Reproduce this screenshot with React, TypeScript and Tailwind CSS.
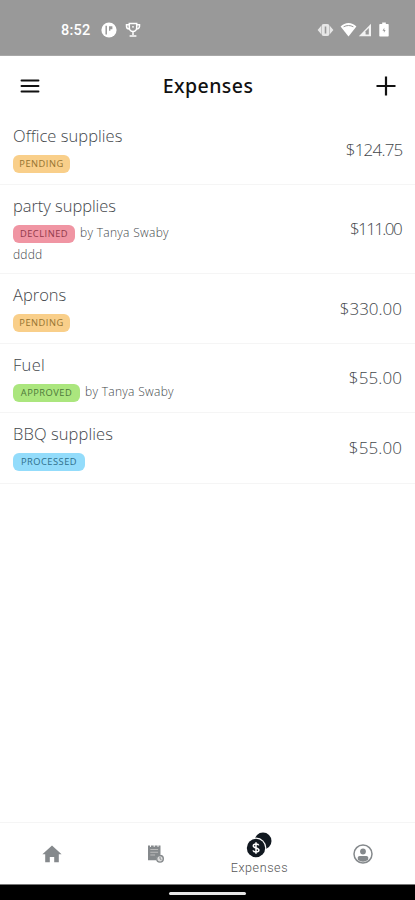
import clsx from "clsx";

type Expense = {
  title: string;
  titleClass: string;
  status: string;
  statusClass: string;
  by?: string;
  note?: string;
  amount: string;
  amountClass: string;
  rowClass: string;
};

const expenses: Expense[] = [
  { title: "Office supplies", titleClass: "tracking-[0.05px]", status: "PENDING", statusClass: "w-[57px] bg-[#f9cf8a] text-[#94722f]", amount: "$124.75", amountClass: "tracking-[-0.8px] mr-[-0.5px]", rowClass: "h-[70px]" },
  { title: "party supplies", titleClass: "tracking-[-0.05px]", status: "DECLINED", statusClass: "w-[62px] bg-[#f095a3] text-[#91394a]", by: "by Tanya Swaby", note: "dddd", amount: "$111.00", amountClass: "tracking-[-1.6px] mr-[1px]", rowClass: "h-[89px]" },
  { title: "Aprons", titleClass: "tracking-[0px]", status: "PENDING", statusClass: "w-[57px] bg-[#f9cf8a] text-[#94722f]", amount: "$330.00", amountClass: "tracking-[0px]", rowClass: "h-[70px]" },
  { title: "Fuel", titleClass: "tracking-[0.3px]", status: "APPROVED", statusClass: "w-[67px] bg-[#abe67e] text-[#4d793a]", by: "by Tanya Swaby", amount: "$55.00", amountClass: "tracking-[0.1px]", rowClass: "h-[69px]" },
  { title: "BBQ supplies", titleClass: "tracking-[0.1px]", status: "PROCESSED", statusClass: "w-[72px] bg-[#93dcfb] text-[#2f6f8c]", amount: "$55.00", amountClass: "tracking-[0.1px]", rowClass: "h-[71px]" },
];

function StatusBar() {
  return (
    <div className="flex h-14 shrink-0 items-center border-b border-[#a8a8a8] bg-[#999999] pt-1 pr-[26px] pl-[61px] text-white">
      <span className="mt-[2px] w-[30px] font-['Roboto'] text-[14.5px] leading-5 font-medium tracking-[0.2px] whitespace-nowrap">8:52</span>
      <svg className="ml-[10px] size-4" viewBox="0 0 16 16">
        <circle cx="8" cy="8" r="7.6" fill="#fff" />
        <path d="M5.2 3.8v8.6" fill="none" stroke="#999" strokeWidth="1.5" />
        <path d="M8 4.2h3.4v3H9.4v1.6H8z" fill="#999" />
      </svg>
      <svg className="ml-2 size-4" viewBox="0 0 16 16" fill="none" stroke="#fff" strokeWidth="1.5">
        <path d="M4.3 1.4h7.4v4.4a3.7 3.7 0 0 1-7.4 0zM4.3 2.8H1.5v1.4a2.8 2.8 0 0 0 2.8 2.8M11.7 2.8h2.8v1.4a2.8 2.8 0 0 1-2.8 2.8M8 9.5V13M4.6 14h6.8" />
        <circle cx="8" cy="4.8" r="0.9" fill="#fff" stroke="none" />
      </svg>
      <div className="ml-auto flex items-center">
        <svg className="h-4 w-[17px]" viewBox="0 0 17 16">
          <rect x="4.6" y="2" width="7.8" height="12" rx="2" fill="#e6e6e6" />
          <path d="M4.2 3.8.6 8l3.6 4.2zM12.8 3.8 16.4 8l-3.6 4.2z" fill="#e6e6e6" />
          <path d="M8.5 4.5v7" stroke="#999" strokeWidth="1.6" />
        </svg>
        <svg className="ml-[6px] h-4 w-[17px]" viewBox="0 0 17 16">
          <path d="M.6 4.6C5-.1 12-.1 16.4 4.6L8.5 14.5z" fill="#fff" />
          <path d="M3.6 4.8c3-1.7 6.8-1.7 9.8 0" fill="none" stroke="#999" strokeWidth="1" />
        </svg>
        <svg className="ml-[1px] size-[14px]" viewBox="0 0 14 14">
          <path d="M13 .8v12.4H.8z" fill="#f2f2f2" />
          <path d="M10.8 5v6.4H7.6V8.2z" fill="#999" />
        </svg>
        <svg className="ml-[7px] h-[15px] w-[10px]" viewBox="0 0 10 15">
          <path d="M3.2.5h3.6V2H9a.7.7 0 0 1 .7.7v11a.7.7 0 0 1-.7.7H1a.7.7 0 0 1-.7-.7v-11A.7.7 0 0 1 1 2h2.2z" fill="#fff" />
          <path d="M5.3 5.8 3.5 8.8h1.4v2L6.6 8H5.3z" fill="#999" />
        </svg>
      </div>
    </div>
  );
}

function Header() {
  return (
    <header className="flex h-[58px] shrink-0 items-center justify-between pt-px pr-[19px] pl-[20px] text-[#111]">
      <svg className="h-[14px] w-[20px]" viewBox="0 0 20 14" stroke="currentColor" strokeWidth="1.9" strokeLinecap="round">
        <path d="M1.5 1.5h17M1.5 7h17M1.5 12.5h17" />
      </svg>
      <h1 className="font-['Noto_Sans'] text-[19.5px] leading-7 font-medium tracking-[0.45px]">Expenses</h1>
      <svg className="size-5" viewBox="0 0 20 20" stroke="currentColor" strokeWidth="2.2">
        <path d="M10 .5v19M.5 10h19" />
      </svg>
    </header>
  );
}

function ExpenseRow({ item }: { item: Expense }) {
  return (
    <li className={clsx("flex shrink-0 items-center justify-between border-b border-[#f5f5f5] pr-[13px] pl-[13px]", item.rowClass)}>
      <div className="flex h-full flex-col pt-[10px]">
        <span className={clsx("text-[16.5px] leading-[22px] whitespace-nowrap", item.titleClass)}>{item.title}</span>
        <div className="mt-[7.5px] flex items-center">
          <span className={clsx("flex h-[18.5px] items-center justify-center rounded-[6px] text-[9.3px] font-normal tracking-[0.5px]", item.statusClass)}>{item.status}</span>
          {item.by && <span className="-mt-px ml-[5px] text-[12px] leading-[18px] tracking-[0.3px] whitespace-nowrap">{item.by}</span>}
        </div>
        {item.note && <span className="mt-[4px] text-[12px] leading-4 tracking-[0.2px]">{item.note}</span>}
      </div>
      <span className={clsx("text-[17px] leading-6", item.amountClass)}>{item.amount}</span>
    </li>
  );
}

function TabBar() {
  return (
    <nav className="grid h-[62px] shrink-0 grid-cols-4 items-center border-t border-[#f5f5f5] text-[#85898c]">
      <div className="flex justify-center">
        <svg className="h-[18px] w-5" viewBox="0 0 20 18" fill="currentColor">
          <path d="M10 .5.4 9.3h2.8v8h4.6v-5.4h4.4v5.4h4.6v-8h2.8z" />
        </svg>
      </div>
      <div className="flex justify-center">
        <svg className="h-[19px] w-[17px]" viewBox="0 0 17 19">
          <path d="M1 1.5h12.5v9.2a4.5 4.5 0 0 0-4.2 5.6H1z" fill="currentColor" />
          <path d="M3.5 0v3M7.2 0v3M11 0v3" stroke="#fff" strokeWidth=".9" />
          <path d="M3.3 5.5h7.8M3.3 8.3h7.8M3.3 11h4.8" stroke="#bbb" strokeWidth="1.1" />
          <circle cx="13" cy="14.8" r="3.3" fill="#ddd" stroke="currentColor" strokeWidth="1.4" />
          <path d="M13 12.8v2l1.5 1" fill="none" stroke="currentColor" strokeWidth="1" />
        </svg>
      </div>
      <div className="flex flex-col items-center">
        <svg className="h-[26px] w-[26px]" viewBox="0 0 26 26">
          <circle cx="17" cy="9" r="8.5" fill="#111820" />
          <circle cx="10" cy="16" r="10.4" fill="#fff" />
          <circle cx="10" cy="16" r="9.2" fill="#111820" />
          <path d="M12.8 13.4c-.3-1-1.3-1.5-2.8-1.5-1.6 0-2.7.7-2.7 1.9 0 2.9 5.6 1.4 5.6 4.3 0 1.3-1.2 2-2.9 2s-2.7-.6-3-1.7M10 10.2v11.6" fill="none" stroke="#fff" strokeWidth="1.5" />
        </svg>
        <span className="mt-[2px] font-['Roboto'] text-[12.5px] leading-4 tracking-[0.6px] text-[#555]">Expenses</span>
      </div>
      <div className="flex justify-center">
        <svg className="size-5" viewBox="0 0 20 20">
          <circle cx="10" cy="10" r="9" fill="none" stroke="currentColor" strokeWidth="1.5" />
          <circle cx="10" cy="7.5" r="2.9" fill="currentColor" />
          <path d="M4.8 15.8v-2.2q0-1.6 1.7-1.6h7q1.7 0 1.7 1.6v2.2Q10 19.5 4.8 15.8z" fill="currentColor" />
        </svg>
      </div>
    </nav>
  );
}

export default function App() {
  return (
    <div className="flex h-[900px] w-[415px] flex-col overflow-hidden bg-white font-['Open_Sans','Noto_Sans',sans-serif] font-light text-[#43474b]">
      <StatusBar />
      <Header />
      <ul className="flex flex-1 flex-col pt-px">
        {expenses.map((item, i) => (
          <ExpenseRow key={i} item={item} />
        ))}
      </ul>
      <TabBar />
      <div className="flex h-4 shrink-0 items-center justify-center border-t border-[#777] bg-black pt-px">
        <div className="h-[3px] w-[77px] rounded-full bg-[#e5e5e5]" />
      </div>
    </div>
  );
}
